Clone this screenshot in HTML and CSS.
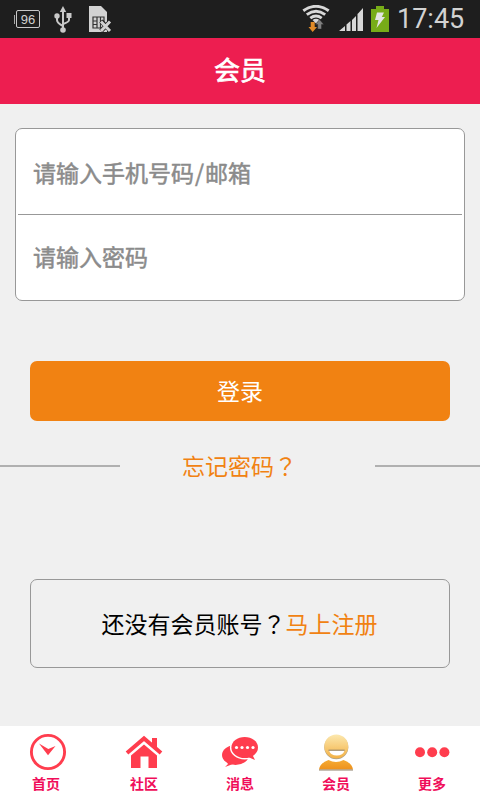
FILE: index.html
```html
<!DOCTYPE html>
<html lang="zh-CN">
<head>
<meta charset="utf-8">
<title>会员</title>
<link rel="stylesheet" href="styles.css">
</head>
<body>
<div class="status">
  <div class="battery-cap"></div>
  <div class="battery-level">96</div>
  <svg class="usb" width="18" height="28" viewBox="0 0 18 28"><g fill="none" stroke="#c8c8c8" stroke-width="2"><path d="M9 4v21M3 11v3q0 3 6 6M15 10v4q0 2-6 4"/></g><g fill="#c8c8c8"><path d="M9 0l3.200 6H5.800z"/><circle cx="3" cy="10" r="2.700"/><path d="M12.500 7h5v5h-5z"/><circle cx="9" cy="24" r="2.800"/></g></svg>
  <svg class="sim" width="23" height="27" viewBox="0 0 23 27"><path d="M0 0h12l6 6v20H0z" fill="#d2d2d2"/><path d="M4 11h11v11H4zM8 11v11M11.500 11v11M4 15h4M4 18.500h4M11.500 15H15" fill="none" stroke="#333" stroke-width="1.200"/><path d="M12 15l9.500 10m0-10L12 25" stroke="#1e1e1e" stroke-width="4.600"/><path d="M12 15.500l9 9.500m0-9.500l-9 9.500" stroke="#d2d2d2" stroke-width="3"/></svg>
  <svg class="wifi" width="28" height="28" viewBox="0 0 28 28"><g fill="none" stroke="#d8d8d8" stroke-width="2.900"><path d="M1.300 5.800Q14-3.200 26.700 5.800M4.800 9.600Q14 3 23.200 9.600M8.300 13.200Q14 9 19.700 13.200"/></g><path d="M10.500 15Q14 12.500 17.500 15L14 18.500z" fill="#d8d8d8"/><path d="M8.700 17h4v5h2.300l-4.300 5-4.200-5h2.200z" fill="#e18b28"/><path d="M15.700 24v-4.500h-2.300l4.200-5 4.200 5h-2.300V24z" fill="#808080" stroke="#1e1e1e" stroke-width=".4"/></svg>
  <svg class="signal" width="24" height="24" viewBox="0 0 24 24"><path d="M0 24l6-5v5zM7.500 24v-6.500l4-3.500v10zM13 24V13l4-4v15zM18.500 24V7l1-1 4.500-5v23z" fill="#d8d8d8"/></svg>
  <svg class="charge" width="18" height="26" viewBox="0 0 18 26"><path d="M5 0h8v3h5v23H0V3h5z" fill="#77ac18"/><path d="M6 6.500h7L10.800 11H14L5.500 22l2-8H4z" fill="#e4e4e4"/></svg>
  <div class="clock">17:45</div>
</div>
<header class="header">会员</header>
<main class="main">
  <div class="fields">
    <div class="field">请输入手机号码<span class="slash">/</span>邮箱</div>
    <div class="rule"></div>
    <div class="field">请输入密码</div>
  </div>
  <div class="login">登录</div>
  <div class="forgot"><i class="line left"></i><span class="forgot-text">忘记密码<span class="mark" lang="zh-TW">？</span></span><i class="line right"></i></div>
  <div class="register"><span>还没有会员账号<span class="mark" lang="zh-TW">？</span></span><span class="link">马上注册</span></div>
</main>
<nav class="nav">
  <div class="tab home"><svg width="40" height="40" viewBox="0 0 40 40"><circle cx="20" cy="20" r="16.600" fill="none" stroke="#ff3d4e" stroke-width="2.900"/><path d="M11 11.500l9.300 5.500 7.200-3-7.500 9.300z" fill="#ff3d4e"/></svg><span>首页</span></div>
  <div class="tab"><svg width="40" height="40" viewBox="0 0 40 40"><path d="M3 21L20 6.500 37 21" fill="none" stroke="#ff3d4e" stroke-width="4"/><path d="M28 6h5v10l-5-4zM20 12.500l13 11V36h-8.500V24.500h-8V36H7V23.500z" fill="#ff3d4e"/></svg><span>社区</span></div>
  <div class="tab"><svg width="40" height="40" viewBox="0 0 40 40"><g fill="#ff3d4e"><ellipse cx="15.500" cy="23" rx="13.500" ry="10"/><path d="M6 29l2 3-3 3 8-3z"/><ellipse cx="24.700" cy="15.500" rx="13.300" ry="10.500" stroke="#fff" stroke-width="3" paint-order="stroke"/><path d="M28 25l7 3-2-4 1-3z"/></g><g fill="#fff"><circle cx="16.500" cy="15.500" r="1.600"/><circle cx="22" cy="15.500" r="1.600"/><circle cx="27.500" cy="15.500" r="1.600"/><circle cx="33" cy="15.500" r="1.600"/></g></svg><span>消息</span></div>
  <div class="tab"><svg width="40" height="40" viewBox="0 0 40 40"><defs><linearGradient id="face" x2="0" y2="1"><stop stop-color="#fce8ae"/><stop offset="1" stop-color="#f3b145"/></linearGradient><linearGradient id="body" x2="0" y2="1"><stop stop-color="#f5ab35"/><stop offset="1" stop-color="#ee921d"/></linearGradient></defs><path d="M3 37.500q1-6.500 9.500-9.500 7.500 4 15 0 8.500 3 9.500 9.500z" fill="url(#body)"/><path d="M3 38h34" stroke="#8d806b" stroke-width="1.200"/><circle cx="20.300" cy="15.200" r="12" fill="#a9a08d"/><circle cx="20.300" cy="14.500" r="12" fill="url(#face)"/><path d="M13 18.500h15.500q-1.500 5-7.700 5t-7.800-5z" fill="#fff"/><path d="M12.500 18.200h16.200" stroke="#8d806b"/></svg><span>会员</span></div>
  <div class="tab"><svg width="40" height="40" viewBox="0 0 40 40"><g fill="#ff3d4e"><circle cx="8" cy="20.200" r="5"/><circle cx="20.200" cy="20.200" r="5"/><circle cx="32.400" cy="20.200" r="5"/></g></svg><span>更多</span></div>
</nav>
</body>
</html>
```
FILE: styles.css
```css
* { box-sizing: border-box; }
body { margin: 0; width: 480px; height: 800px; display: flex; flex-direction: column; background: #f0f0f0; font-family: "Noto Sans CJK SC", sans-serif; font-size: 23px; overflow: hidden; }
svg { display: block; flex: none; }
.status { height: 38px; flex: none; background: #1e1e1e; display: flex; align-items: flex-start; color: #d2d2d2; }
.battery-cap { width: 1px; height: 9px; margin: 15px 1px 0 14px; background: #a8a8a8; }
.battery-level { width: 24px; height: 18px; margin-top: 10px; border: 1px solid #c8c8c8; border-radius: 2px; font: 13px/18px "Liberation Sans", sans-serif; text-align: center; }
.usb { margin: 6px 0 0 14px; }
.sim { margin: 6px 0 0 17px; }
.wifi { margin: 5px 0 0 190px; }
.signal { margin: 7px 0 0 9px; }
.charge { margin: 6px 0 0 8px; }
.clock { margin-left: 8px; font: 27px/39px Roboto, sans-serif; }
.header { height: 66px; flex: none; background: #ed1e50; color: #fff; font-size: 26px; line-height: 62px; text-align: center; -webkit-text-stroke: 0.7px #fff; }
.main { flex: 1; display: flex; flex-direction: column; }
.fields { margin: 24px 15px 0; height: 173px; border: 1px solid #989898; border-radius: 7px; background: #fff; color: #8b8b8b; padding: 0 2px; }
.field { height: 85px; line-height: 86px; padding-left: 15px; -webkit-text-stroke: 0.5px #8b8b8b; }
.slash { display: inline-block; width: 11px; text-align: center; }
.rule { height: 1px; background: #989898; }
.rule + .field { line-height: 82px; }
.login { margin: 60px 30px 0; height: 60px; line-height: 59px; border-radius: 7px; background: #f18212; color: #fff; text-align: center; }
.forgot { margin-top: 28px; height: 34px; display: flex; align-items: center; color: #f18212; }
.line { height: 2px; background: #b0b0b0; }
.left { width: 120px; }
.right { width: 105px; }
.forgot-text { width: 255px; padding-left: 62px; line-height: 32px; height: 34px; }
.mark { font-family: "Noto Sans CJK TC", sans-serif; }
.register { margin: 96px 30px 0; height: 89px; border: 1px solid #989898; border-radius: 7px; color: #000; display: flex; justify-content: center; line-height: 87px; padding-right: 1px; }
.link { color: #f18212; }
.nav { height: 74px; flex: none; background: #fff; display: grid; grid-template-columns: repeat(5, 1fr); color: #f00d5a; font-size: 14px; font-weight: 700; }
.tab { display: flex; flex-direction: column; align-items: center; padding-top: 6px; line-height: 22px; }
.home span { margin-right: 4px; }
```
